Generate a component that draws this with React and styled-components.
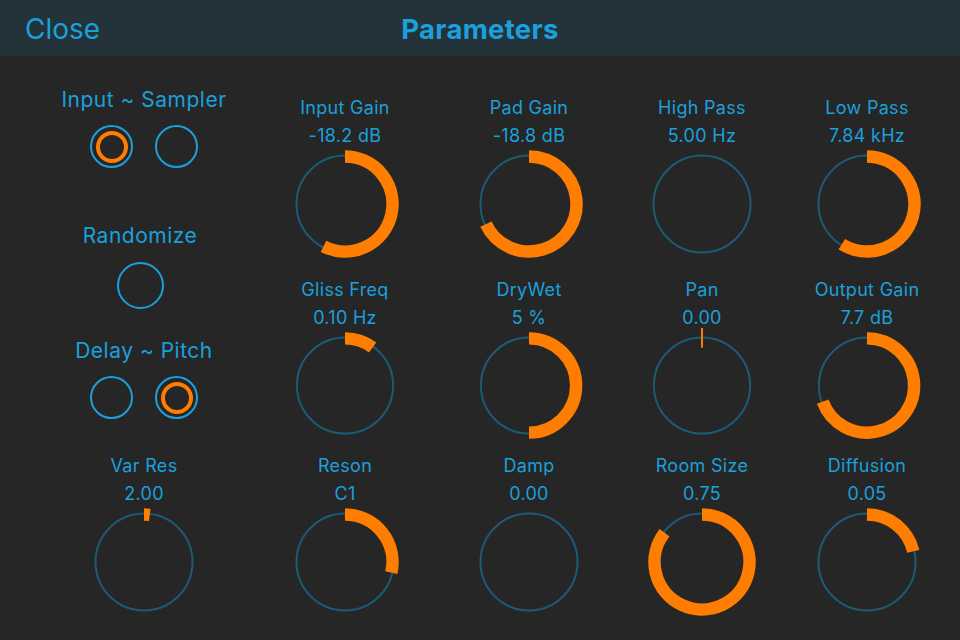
import React from "react";
import styled, { createGlobalStyle } from "styled-components";

const BLUE = "#1aa0dc";
const TRACK = "#1b5b76";
const ORANGE = "#ff7d00";

const Global = createGlobalStyle`
  html, body { margin: 0; padding: 0; background: #262626; }
  body { font-family: Inter, Roboto, "Liberation Sans", sans-serif; }
  * { box-sizing: border-box; }
`;

const Screen = styled.div`
  width: 960px;
  height: 640px;
  background: #262626;
  overflow: hidden;
`;

const Header = styled.header`
  height: 56px;
  background: #24323a;
  display: grid;
  grid-template-columns: 1fr auto 1fr;
  align-items: center;
  padding: 2px 25px 0;
`;

const CloseButton = styled.button`
  justify-self: start;
  background: none;
  border: none;
  padding: 0;
  color: ${BLUE};
  font-family: inherit;
  font-size: 28px;
  font-weight: 400;
  cursor: pointer;
`;

const Title = styled.h1`
  margin: 0;
  color: ${BLUE};
  font-size: 27.5px;
  font-weight: 700;
  letter-spacing: 0.3px;
`;

const Grid = styled.main`
  display: grid;
  grid-template-columns: 208px 194px 174px 172px 158px;
  grid-template-rows: 182px 176px auto;
  padding: 31px 0 0 40px;
`;

const SidePanel = styled.section`
  grid-column: 1;
  grid-row: 1 / span 2;
  display: flex;
  flex-direction: column;
  align-items: center;
  margin-top: -1px;
`;

const GroupTitle = styled.div`
  color: ${BLUE};
  font-size: 21px;
  line-height: 28px;
  letter-spacing: 0.5px;
  margin-top: ${(p) => p.$mt || 0}px;
  transform: translateX(${(p) => p.$dx || 0}px);
`;

const ToggleRow = styled.div`
  display: flex;
  gap: 22px;
  margin-top: ${(p) => p.$mt || 0}px;
`;

const Toggle = styled.div`
  width: ${(p) => p.$size || 43}px;
  height: ${(p) => p.$size || 43}px;
  border: 2px solid ${BLUE};
  border-radius: 50%;
  display: flex;
  align-items: center;
  justify-content: center;
  margin-top: ${(p) => p.$mt || 0}px;
  transform: translateX(${(p) => p.$dx || 0}px);
`;

const ToggleDot = styled.div`
  width: 32px;
  height: 32px;
  border: 4.5px solid ${ORANGE};
  border-radius: 50%;
`;

const KnobCell = styled.div`
  grid-column: ${(p) => p.$col};
  grid-row: ${(p) => p.$row};
  display: flex;
  flex-direction: column;
  align-items: center;
  padding-top: 9px;
`;

const KnobLabel = styled.div`
  color: ${BLUE};
  font-size: 18px;
  line-height: 24px;
  letter-spacing: 0.3px;
  white-space: nowrap;
`;

const KnobValue = styled(KnobLabel)`
  margin-top: 4px;
`;

const KnobSvg = styled.svg`
  display: block;
  margin-top: -4px;
`;

const S = 120;
const C = S / 2;

function arcPath(r, deg) {
  const a = (deg * Math.PI) / 180;
  const x = C + r * Math.sin(a);
  const y = C - r * Math.cos(a);
  const large = deg > 180 ? 1 : 0;
  return `M ${C} ${C - r} A ${r} ${r} 0 ${large} 1 ${x.toFixed(2)} ${y.toFixed(2)}`;
}

function Knob({ label, value, angle, tick, col, row }) {
  return (
    <KnobCell $col={col} $row={row}>
      <KnobLabel>{label}</KnobLabel>
      <KnobValue>{value}</KnobValue>
      <KnobSvg width={S} height={S} viewBox={`0 0 ${S} ${S}`}>
        <circle cx={C} cy={C} r={48.5} fill="none" stroke={TRACK} strokeWidth={2} />
        {angle > 0 && (
          <path d={arcPath(47.5, angle)} fill="none" stroke={ORANGE} strokeWidth={12.5} />
        )}
        {tick && <line x1={C} y1={C - 58} x2={C} y2={C - 38} stroke={ORANGE} strokeWidth={2} />}
      </KnobSvg>
    </KnobCell>
  );
}

const knobs = [
  { label: "Input Gain", value: "-18.2 dB", angle: 207, col: 2, row: 1 },
  { label: "Pad Gain", value: "-18.8 dB", angle: 245, col: 3, row: 1 },
  { label: "High Pass", value: "5.00 Hz", angle: 0, col: 4, row: 1 },
  { label: "Low Pass", value: "7.84 kHz", angle: 212, col: 5, row: 1 },
  { label: "Gliss Freq", value: "0.10 Hz", angle: 36, col: 2, row: 2 },
  { label: "DryWet", value: "5 %", angle: 180, col: 3, row: 2 },
  { label: "Pan", value: "0.00", angle: 0, tick: true, col: 4, row: 2 },
  { label: "Output Gain", value: "7.7 dB", angle: 250, col: 5, row: 2 },
  { label: "Var Res", value: "2.00", angle: 7, col: 1, row: 3 },
  { label: "Reson", value: "C1", angle: 103, col: 2, row: 3 },
  { label: "Damp", value: "0.00", angle: 0, col: 3, row: 3 },
  { label: "Room Size", value: "0.75", angle: 308, col: 4, row: 3 },
  { label: "Diffusion", value: "0.05", angle: 77, col: 5, row: 3 },
];

export default function App() {
  return (
    <Screen>
      <Global />
      <Header>
        <CloseButton>Close</CloseButton>
        <Title>Parameters</Title>
        <span />
      </Header>
      <Grid>
        <SidePanel>
          <GroupTitle>Input ~ Sampler</GroupTitle>
          <ToggleRow $mt={11}>
            <Toggle><ToggleDot /></Toggle>
            <Toggle />
          </ToggleRow>
          <GroupTitle $mt={54} $dx={-4}>Randomize</GroupTitle>
          <Toggle $size={47} $mt={12} $dx={-4} />
          <GroupTitle $mt={28}>Delay ~ Pitch</GroupTitle>
          <ToggleRow $mt={11}>
            <Toggle />
            <Toggle><ToggleDot /></Toggle>
          </ToggleRow>
        </SidePanel>
        {knobs.map((k) => (
          <Knob key={k.label} {...k} />
        ))}
      </Grid>
    </Screen>
  );
}
